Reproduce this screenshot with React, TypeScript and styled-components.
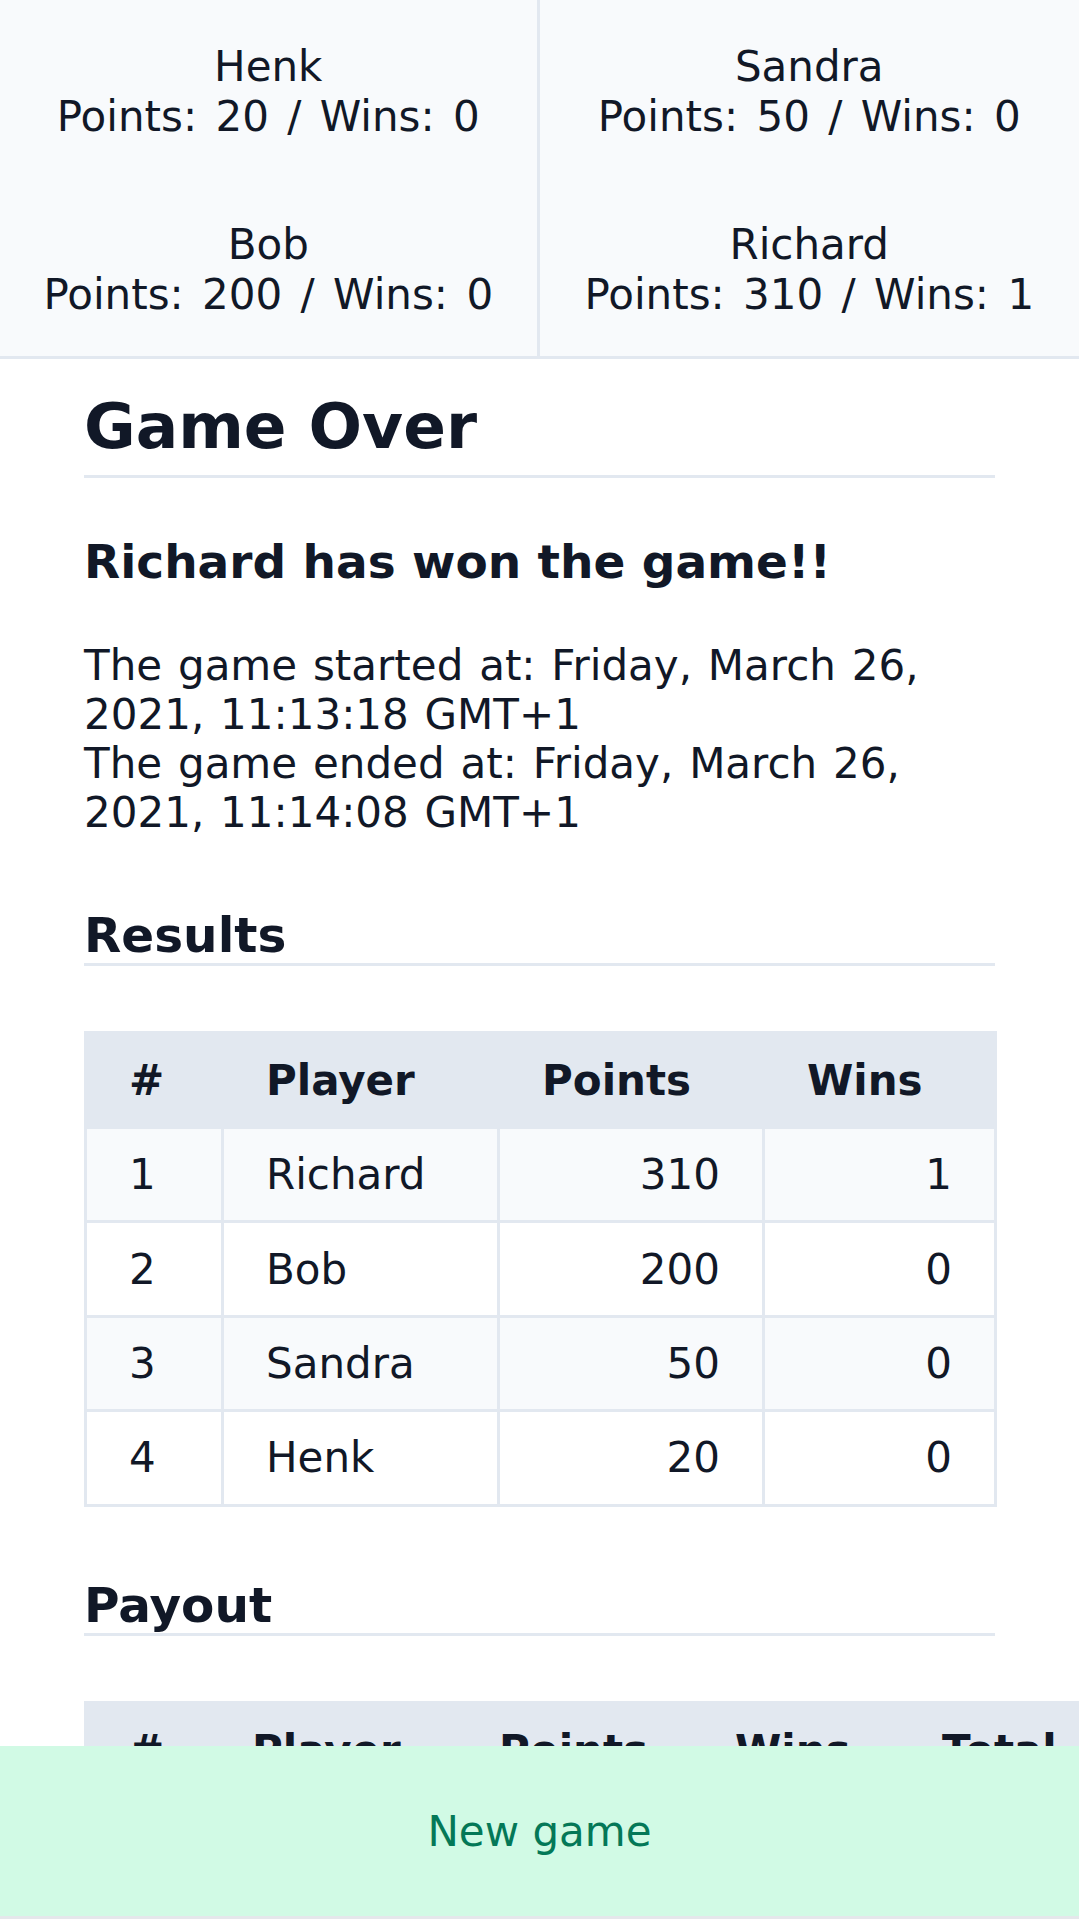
import React from "react";
import styled, { createGlobalStyle } from "styled-components";

const GlobalStyle = createGlobalStyle`
  *, *::before, *::after {
    box-sizing: border-box;
  }
  html {
    scrollbar-width: none;
  }
  html::-webkit-scrollbar, body::-webkit-scrollbar {
    display: none;
  }
  body {
    margin: 0;
    overflow-x: hidden;
    background: #ffffff;
    color: #111827;
    font-family: "DejaVu Sans", Verdana, sans-serif;
    line-height: normal;
  }
`;

const Scoreboard = styled.section`
  display: grid;
  grid-template-columns: 1fr 1fr;
  background: #f8fafc;
  border-bottom: 3px solid #e2e8f0;
`;

const PlayerCell = styled.div<{ $left: boolean }>`
  padding: 42px 0 36px;
  text-align: center;
  font-size: 42px;
  line-height: 50px;
  word-spacing: 5px;
  border-right: ${(p) => (p.$left ? "3px solid #e2e8f0" : "none")};
`;

const Main = styled.main`
  padding: 31px 84px 0;
`;

const Title = styled.h1`
  margin: 0;
  font-size: 63px;
  font-weight: 700;
  line-height: normal;
  padding-bottom: 11.5px;
  border-bottom: 3px solid #e2e8f0;
`;

const Winner = styled.h2`
  margin: 56px 0 0;
  font-size: 47px;
  font-weight: 700;
  line-height: normal;
`;

const Times = styled.p`
  margin: 52px 0 0;
  font-size: 42px;
  line-height: 49px;
  word-spacing: 2.5px;
`;

const SectionHeading = styled.h2`
  margin: 70.5px 0 0;
  font-size: 48.5px;
  font-weight: 700;
  line-height: normal;
  border-bottom: 3px solid #e2e8f0;
`;

const Table = styled.table<{ $width: number }>`
  margin-top: 65px;
  border-collapse: collapse;
  table-layout: fixed;
  width: ${(p) => p.$width}px;
  font-size: 42px;
  line-height: 49px;
`;

const HeadCell = styled.th<{ $w: number }>`
  width: ${(p) => p.$w}px;
  background: #e2e8f0;
  border: 3px solid #e2e8f0;
  padding: 21.5px 42px;
  text-align: left;
  font-weight: 700;
  white-space: nowrap;
`;

const Row = styled.tr<{ $striped: boolean }>`
  background: ${(p) => (p.$striped ? "#f8fafc" : "#ffffff")};
`;

const Cell = styled.td<{ $num?: boolean }>`
  border: 3px solid #e2e8f0;
  padding: 21.2px 42px;
  text-align: ${(p) => (p.$num ? "right" : "left")};
  white-space: nowrap;
`;

const Spacer = styled.div`
  height: 260px;
`;

const Footer = styled.div`
  position: fixed;
  left: 0;
  right: 0;
  bottom: 0;
  border-bottom: 3px solid #e5e7eb;
  background: #f8fafc;
`;

const NewGameButton = styled.button`
  display: flex;
  align-items: center;
  justify-content: center;
  width: 100%;
  height: 170px;
  margin: 0;
  border: none;
  background: #d1fae5;
  color: #047857;
  font-family: "DejaVu Sans", Verdana, sans-serif;
  font-size: 42px;
  cursor: pointer;
`;

const players = [
  { name: "Henk", points: 20, wins: 0 },
  { name: "Sandra", points: 50, wins: 0 },
  { name: "Bob", points: 200, wins: 0 },
  { name: "Richard", points: 310, wins: 1 },
];

const ranking = [...players].sort((a, b) => b.points - a.points);

const resultCols = [
  { label: "#", w: 137 },
  { label: "Player", w: 276 },
  { label: "Points", w: 265 },
  { label: "Wins", w: 232 },
];

const payoutCols = [
  { label: "#", w: 123 },
  { label: "Player", w: 247 },
  { label: "Points", w: 236 },
  { label: "Wins", w: 207 },
  { label: "Total", w: 240 },
];

const payoutTotals = ["€ 4.50", "€ 1.20", "-€ 2.10", "-€ 3.60"];

export default function App() {
  return (
    <>
      <GlobalStyle />
      <Scoreboard>
        {players.map((p, i) => (
          <PlayerCell key={p.name} $left={i % 2 === 0}>
            {p.name}
            <br />
            Points: {p.points} / Wins: {p.wins}
          </PlayerCell>
        ))}
      </Scoreboard>
      <Main>
        <Title>Game Over</Title>
        <Winner>Richard has won the game!!</Winner>
        <Times>
          The game started at: Friday, March 26, 2021, 11:13:18 GMT+1
          <br />
          The game ended at: Friday, March 26, 2021, 11:14:08 GMT+1
        </Times>

        <SectionHeading>Results</SectionHeading>
        <Table $width={910}>
          <thead>
            <tr>
              {resultCols.map((c) => (
                <HeadCell key={c.label} $w={c.w}>
                  {c.label}
                </HeadCell>
              ))}
            </tr>
          </thead>
          <tbody>
            {ranking.map((p, i) => (
              <Row key={p.name} $striped={i % 2 === 0}>
                <Cell>{i + 1}</Cell>
                <Cell>{p.name}</Cell>
                <Cell $num>{p.points}</Cell>
                <Cell $num>{p.wins}</Cell>
              </Row>
            ))}
          </tbody>
        </Table>

        <SectionHeading>Payout</SectionHeading>
        <Table $width={1053}>
          <thead>
            <tr>
              {payoutCols.map((c) => (
                <HeadCell key={c.label} $w={c.w}>
                  {c.label}
                </HeadCell>
              ))}
            </tr>
          </thead>
          <tbody>
            {ranking.map((p, i) => (
              <Row key={p.name} $striped={i % 2 === 0}>
                <Cell>{i + 1}</Cell>
                <Cell>{p.name}</Cell>
                <Cell $num>{p.points}</Cell>
                <Cell $num>{p.wins}</Cell>
                <Cell $num>{payoutTotals[i]}</Cell>
              </Row>
            ))}
          </tbody>
        </Table>
        <Spacer />
      </Main>
      <Footer>
        <NewGameButton type="button">New game</NewGameButton>
      </Footer>
    </>
  );
}
